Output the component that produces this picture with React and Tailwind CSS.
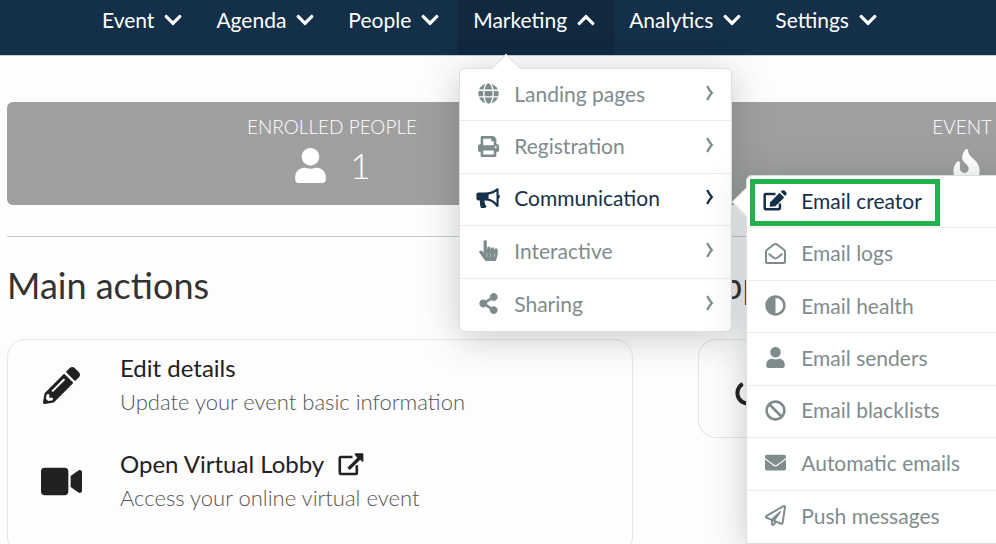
import React from "react";
import {
  FaAdjust,
  FaBan,
  FaChevronDown,
  FaChevronUp,
  FaEnvelope,
  FaFire,
  FaGlobe,
  FaHandPointer,
  FaPencilAlt,
  FaPowerOff,
  FaPrint,
  FaRegEnvelopeOpen,
  FaRegPaperPlane,
  FaShareAlt,
  FaUser,
  FaVideo,
} from "react-icons/fa";

function BullhornIcon() {
  return (
    <svg viewBox="0 0 24 21" className="h-[21px] w-6 shrink-0" fill="currentColor">
      <path d="M2.5 4.5H11V12.5H8.6C8.3 14.6 9 16.6 10.6 18.4C10 19.8 7.4 20.4 4.8 19.8C4.2 17.4 3.7 15 3.9 12.5H2.5C1.2 12.5.4 11.7.4 10.5V6.5C.4 5.3 1.2 4.5 2.5 4.5Z" />
      <path
        fillRule="evenodd"
        d="M10.5 4.5C14.4 4.3 18 3 20.6.6C21.4 0 22.6.4 22.6 1.5V6.8C23.4 7.2 23.9 7.8 23.9 8.7C23.9 9.6 23.4 10.2 22.6 10.6V17.8C22.6 18.9 21.4 19.3 20.6 18.7C18 15 14.4 12.7 10.5 12.5ZM12.6 6.5V10.8C15.6 11.4 18.2 12.9 20.5 15.3V3.5C18.2 5.1 15.6 6.1 12.6 6.5Z"
      />
    </svg>
  );
}

function EditIcon() {
  return (
    <svg viewBox="0 0 24 21" className="h-[21px] w-6 shrink-0" fill="currentColor">
      <path
        d="M12.5 4H2.6C2.1 4 1.7 4.4 1.7 4.9V18.3C1.7 18.8 2.1 19.2 2.6 19.2H16C16.5 19.2 16.9 18.8 16.9 18.3V13.5"
        fill="none"
        stroke="currentColor"
        strokeWidth="2.5"
      />
      <path d="M16.6 2.8L21.2 7.4L12.4 16.2L7.6 16.7C7.1 16.7 6.7 16.3 6.7 15.8L7.2 12.2Z" />
      <path d="M17.8 1.8L19.1.6C19.8 0 20.8 0 21.5.6L23.3 2.4C23.9 3 23.9 3.9 23.3 4.6L22.1 5.9Z" />
    </svg>
  );
}

function ExternalIcon() {
  return (
    <svg viewBox="0 0 26 23" className="h-[23px] w-[26px] shrink-0" fill="currentColor">
      <path
        d="M14.5 4H2.8C2.2 4 1.8 4.4 1.8 5V20C1.8 20.6 2.2 21 2.8 21H17.8C18.4 21 18.8 20.6 18.8 20V12.2"
        fill="none"
        stroke="currentColor"
        strokeWidth="2.6"
      />
      <path d="M17.6.3H24.6C25 .3 25.4.7 25.4 1.1V8C25.4 8.7 24.6 9 24.1 8.6L22.2 6.7L11.8 17.1L9.4 14.7L19.3 4.8L17 2.1C16.3 1.4 16.7.3 17.6.3Z" />
    </svg>
  );
}

const marketing = [
  { label: "Landing pages", icon: FaGlobe },
  { label: "Registration", icon: FaPrint },
  { label: "Communication", icon: BullhornIcon, active: true },
  { label: "Interactive", icon: FaHandPointer },
  { label: "Sharing", icon: FaShareAlt },
];

const communication = [
  { label: "Email creator", icon: EditIcon, active: true },
  { label: "Email logs", icon: FaRegEnvelopeOpen },
  { label: "Email health", icon: FaAdjust },
  { label: "Email senders", icon: FaUser },
  { label: "Email blacklists", icon: FaBan },
  { label: "Automatic emails", icon: FaEnvelope },
  { label: "Push messages", icon: FaRegPaperPlane },
];

function RightCaret() {
  return (
    <svg viewBox="0 0 8 16" className="mb-[2px] h-4 w-2 shrink-0" fill="none" stroke="currentColor" strokeWidth="2.3">
      <path d="M1.2 1 C2.6 4 4 6 5.8 8 C4 10 2.6 12 1.2 15" />
    </svg>
  );
}

function MenuItem({ item, caret }) {
  const Icon = item.icon;
  return (
    <li className="flex border-b border-[#ececec] last:border-b-0">
      <a
        href="#"
        className={`flex flex-1 items-center px-[17px] pb-[2px] text-[21px] leading-6 ${
          item.active ? "text-[#17304a]" : "text-[#7f8c8d]"
        }`}
      >
        <span className="flex w-[22px] justify-center">
          <Icon size={21} />
        </span>
        <span className="ml-[15px] flex-1 whitespace-nowrap">{item.label}</span>
        {caret && <RightCaret />}
      </a>
    </li>
  );
}

function NavItem({ label, open, children }) {
  const Chevron = open ? FaChevronUp : FaChevronDown;
  return (
    <li className={`relative flex ${open ? "bg-[#11283f]" : ""}`}>
      <button type="button" className="flex items-center gap-[9px] pb-4 pl-[15px] pr-[18px] text-[21px] leading-6 text-white">
        {label}
        <Chevron size={20} />
      </button>
      {children}
    </li>
  );
}

function Action({ icon: Icon, size, title, text, external }) {
  return (
    <a href="#" className="flex items-center text-[#212121]">
      <span className="flex w-[106px] justify-center">
        <Icon size={size} />
      </span>
      <span className="flex flex-col gap-[2px] pl-[6px]">
        <span className="flex items-center gap-[14px] text-2xl leading-8">
          {title}
          {external && <ExternalIcon />}
        </span>
        <span className="text-[22px] font-light leading-8 text-[#555]">{text}</span>
      </span>
    </a>
  );
}

export default function App() {
  return (
    <div className="h-screen overflow-hidden bg-[#fdfdfd] font-['Lato',sans-serif]">
      <header className="relative z-10 border-b border-[#c5ccd3] bg-[#142f48]">
        <nav>
          <ul className="flex h-[55px] pl-[87px]">
            <NavItem label="Event" />
            <NavItem label="Agenda" />
            <NavItem label="People" />
            <NavItem label="Marketing" open>
              <div className="absolute left-px top-[68px] w-[273px] rounded-md border border-[#dcdfe0] bg-white shadow-[0_6px_36px_rgba(34,50,60,0.25)]">
                <span className="absolute -top-[11px] left-[36px] size-5 rotate-45 border-l border-t border-[#dcdfe0] bg-white" />
                <ul className="relative grid h-[262px] grid-rows-5">
                  {marketing.map((item) => (
                    <MenuItem key={item.label} item={item} caret />
                  ))}
                </ul>
                <div className="absolute left-[286px] top-[106px] w-[273px] rounded-tl-md border border-[#dcdfe0] bg-white shadow-[0_6px_36px_rgba(34,50,60,0.25)]">
                  <span className="absolute -left-[11px] top-[16px] size-5 rotate-45 border-b border-l border-[#dcdfe0] bg-white" />
                  <ul className="relative grid h-[367px] grid-rows-7">
                    {communication.map((item) => (
                      <MenuItem key={item.label} item={item} />
                    ))}
                  </ul>
                  <span className="pointer-events-none absolute left-[3px] top-[3px] h-[47px] w-[190px] border-[5px] border-[#22b14c]" />
                </div>
              </div>
            </NavItem>
            <NavItem label="Analytics" />
            <NavItem label="Settings" />
          </ul>
        </nav>
      </header>

      <main className="pl-[7px] pt-[46px]">
        <section className="flex h-[103px] overflow-hidden rounded-l-md bg-[#9f9f9f] pt-[11px] text-white">
          <div className="flex w-[650px] shrink-0 flex-col items-center">
            <h2 className="text-[19px] font-light leading-7">ENROLLED PEOPLE</h2>
            <div className="flex items-center gap-[22px] pt-1">
              <FaUser size={35} />
              <span className="text-4xl font-light leading-10">1</span>
            </div>
          </div>
          <div className="flex flex-1 flex-col items-end pr-1">
            <h2 className="text-[19px] font-light leading-7">EVENT</h2>
            <div className="pr-2 pt-2">
              <FaFire size={35} />
            </div>
          </div>
        </section>

        <hr className="mt-[31px] border-[#c8cbcb]" />

        <div className="grid grid-cols-[626px_1fr] gap-x-[65px] pt-[23px]">
          <section>
            <h1 className="text-4xl leading-[50px] text-[#333]">Main actions</h1>
            <div className="mt-[29px] flex flex-col gap-[30px] rounded-[18px] border border-[#e6e6e6] pb-10 pt-3">
              <Action icon={FaPencilAlt} size={37} title="Edit details" text="Update your event basic information" />
              <Action icon={FaVideo} size={41} title="Open Virtual Lobby" text="Access your online virtual event" external />
            </div>
          </section>
          <section>
            <h1 className="text-4xl leading-[50px] text-[#333]">Apps</h1>
            <div className="mt-[29px] flex h-[99px] items-center rounded-l-[18px] border border-r-0 border-[#e6e6e6] pl-9 pt-2 text-[#212121]">
              <FaPowerOff size={26} />
            </div>
          </section>
        </div>
      </main>
    </div>
  );
}
